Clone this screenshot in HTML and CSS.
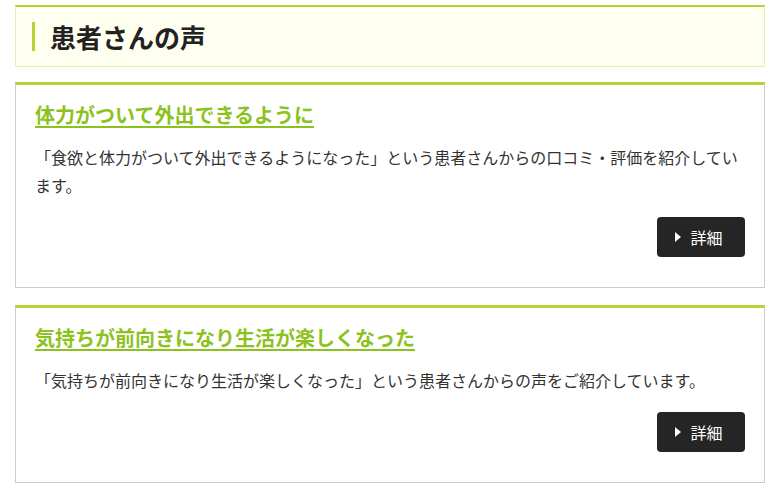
FILE: index.html
```html
<!DOCTYPE html>
<html lang="ja">
<head>
<meta charset="utf-8">
<title>患者さんの声</title>
<link rel="stylesheet" href="styles.css">
</head>
<body>
<div class="page">
  <div class="section-head">
    <h2 class="section-title">患者さんの声</h2>
  </div>

  <div class="card">
    <a class="card-title" href="#">体力がついて外出できるように</a>
    <p class="card-text">「食欲と体力がついて外出できるようになった」という患者さんからの口コミ・評価を紹介しています。</p>
    <div class="card-foot">
      <a class="btn" href="#"><span class="tri"></span>詳細</a>
    </div>
  </div>

  <div class="card">
    <a class="card-title" href="#">気持ちが前向きになり生活が楽しくなった</a>
    <p class="card-text">「気持ちが前向きになり生活が楽しくなった」という患者さんからの声をご紹介しています。</p>
    <div class="card-foot">
      <a class="btn" href="#"><span class="tri"></span>詳細</a>
    </div>
  </div>
</div>
</body>
</html>
```

FILE: styles.css
```css
* { box-sizing: border-box; }
html, body { margin: 0; padding: 0; background: #fff; }
body {
  font-family: "Noto Sans CJK JP", "Noto Sans", sans-serif;
  color: #333;
}
.page {
  padding: 5px 11px 0 15px;
  display: flex;
  flex-direction: column;
  gap: 15px;
}
.section-head {
  background: #fffff0;
  border: 1px solid #e4efad;
  border-top: 2px solid #b5d336;
  height: 62px;
  padding: 15px 15px 0 16px;
}
.section-title {
  margin: 0;
  border-left: 3px solid #b5d336;
  padding-left: 15px;
  font-size: 26px;
  font-weight: 700;
  line-height: 29px;
  color: #222;
}
.card {
  border: 1px solid #cccccc;
  border-top: 3px solid #b5d336;
  padding: 15px 19px 30px 19px;
  display: flex;
  flex-direction: column;
  align-items: flex-start;
}
.card + .card { margin-top: 2px; }
.card-title {
  font-size: 20px;
  font-weight: 700;
  line-height: 30px;
  color: #8cc21d;
  text-decoration: underline;
  text-underline-offset: 3px;
}
.card-text {
  margin: 13px 0 18px;
  font-size: 16px;
  line-height: 28px;
  color: #333;
}
.card-foot {
  align-self: stretch;
  display: flex;
  justify-content: flex-end;
}
.btn {
  display: flex;
  align-items: center;
  justify-content: center;
  gap: 9px;
  width: 88px;
  height: 40px;
  background: #252525;
  border-radius: 4px;
  color: #fff;
  font-size: 16px;
  text-decoration: none;
  padding-right: 4px;
}
.tri {
  width: 0;
  height: 0;
  border-top: 5px solid transparent;
  border-bottom: 5px solid transparent;
  border-left: 6px solid #fff;
}
```
